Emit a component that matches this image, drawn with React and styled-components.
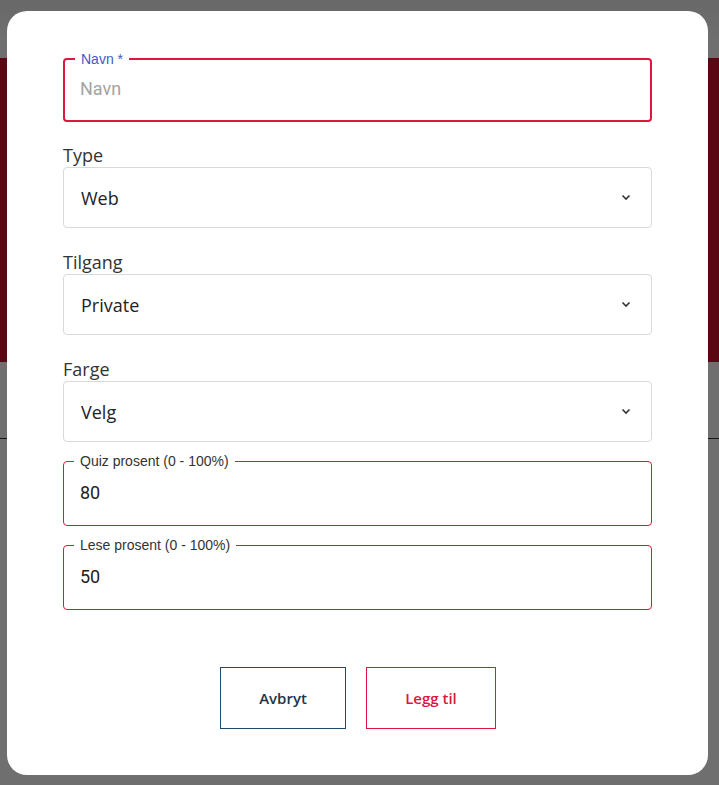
import React from 'react';
import styled, { createGlobalStyle } from 'styled-components';

const GlobalStyle = createGlobalStyle`
  html, body {
    margin: 0;
    padding: 0;
    height: 100%;
    background: #ffffff;
    overflow: hidden;
  }
  #root {
    height: 100%;
  }
`;

const PageBehind = styled.div`
  display: flex;
  flex-direction: column;
  height: 785px;
  background: linear-gradient(#f0f0f0 0, #ffffff 40px);
`;

const Spacer = styled.div`
  height: ${p => p.h}px;
`;

const Banner = styled.div`
  height: 304px;
  background: #d1112d;
`;

const Divider = styled.div`
  height: 1px;
  background: #333;
  margin-top: 76px;
`;

const Overlay = styled.div`
  position: fixed;
  inset: 0;
  background: rgba(0, 0, 0, 0.565);
  display: flex;
  padding: 11px 11px 10px 7px;
  box-sizing: border-box;
`;

const Dialog = styled.div`
  flex: 1;
  background: #fff;
  border-radius: 20px;
  padding: 47px 56px 0 56px;
  display: flex;
  flex-direction: column;
  box-sizing: border-box;
`;

const Outlined = styled.div`
  position: relative;
  margin-top: ${p => p.mt || 0}px;
  height: ${p => (p.focused ? 64 : 65)}px;
  box-sizing: border-box;
  border: ${p => (p.focused ? 2 : 1.3)}px solid #d9193e;
  border-radius: 4px;
  display: flex;
  align-items: center;
  padding: 0 16px 0 ${p => (p.focused ? 15 : 16)}px;
`;

const FloatLabel = styled.span`
  position: absolute;
  top: -9px;
  left: 10px;
  padding: 0 6px;
  background: #fff;
  font-family: "Liberation Sans", Arial, sans-serif;
  font-size: 14px;
  line-height: 16px;
  color: ${p => p.color || '#333'};
`;

const FieldInput = styled.div`
  font-family: Roboto, "Liberation Sans", sans-serif;
  font-size: 18px;
  line-height: 22px;
  color: ${p => (p.placeholder ? '#a3a3a3' : '#222')};
  margin-top: ${p => p.offset || 0}px;
`;

const Label = styled.div`
  font-family: "Open Sans", "Liberation Sans", sans-serif;
  font-size: 18px;
  line-height: 24px;
  color: #333;
  margin-top: ${p => p.mt}px;
`;

const SelectBox = styled.div`
  height: 61px;
  box-sizing: border-box;
  border: 1px solid #d9d9d9;
  border-radius: 4px;
  display: flex;
  align-items: center;
  justify-content: space-between;
  padding: 0 20px 0 17px;
  font-family: "Open Sans", "Liberation Sans", sans-serif;
  font-size: 18px;
  color: #222;
`;

const Buttons = styled.div`
  display: flex;
  justify-content: center;
  gap: 20px;
  margin-top: 57px;
  padding-left: 1px;
`;

const Button = styled.button`
  width: ${p => p.w}px;
  height: 62px;
  background: #fff;
  border: 1.5px solid ${p => p.color};
  color: ${p => p.text};
  font-family: "Open Sans", "Liberation Sans", sans-serif;
  font-size: 15px;
  font-weight: 600;
  padding: 0;
  cursor: pointer;
`;

const Chevron = () => (
  <svg width="10" height="7" viewBox="0 0 10 7">
    <polyline points="1.5,1.5 5,5 8.5,1.5" fill="none" stroke="#333" strokeWidth="1.6" />
  </svg>
);

const Select = ({ label, value, mt }) => (
  <>
    <Label mt={mt}>{label}</Label>
    <SelectBox>
      <span>{value}</span>
      <Chevron />
    </SelectBox>
  </>
);

export default function App() {
  return (
    <>
      <GlobalStyle />
      <PageBehind>
        <Spacer h={58} />
        <Banner />
        <Divider />
      </PageBehind>
      <Overlay>
        <Dialog>
          <Outlined focused>
            <FloatLabel color="#4659c2">Navn *</FloatLabel>
            <FieldInput placeholder offset={-3}>Navn</FieldInput>
          </Outlined>
          <Select label="Type" value="Web" mt={21} />
          <Select label="Tilgang" value="Private" mt={22} />
          <Select label="Farge" value="Velg" mt={22} />
          <Outlined mt={19}>
            <FloatLabel>Quiz prosent (0 - 100%)</FloatLabel>
            <FieldInput offset={-2}>80</FieldInput>
          </Outlined>
          <Outlined mt={19}>
            <FloatLabel>Lese prosent (0 - 100%)</FloatLabel>
            <FieldInput offset={-2}>50</FieldInput>
          </Outlined>
          <Buttons>
            <Button w={126} color="#1b4a6b" text="#1f3548">Avbryt</Button>
            <Button w={130} color="#d9193e" text="#d9193e">Legg til</Button>
          </Buttons>
        </Dialog>
      </Overlay>
    </>
  );
}
